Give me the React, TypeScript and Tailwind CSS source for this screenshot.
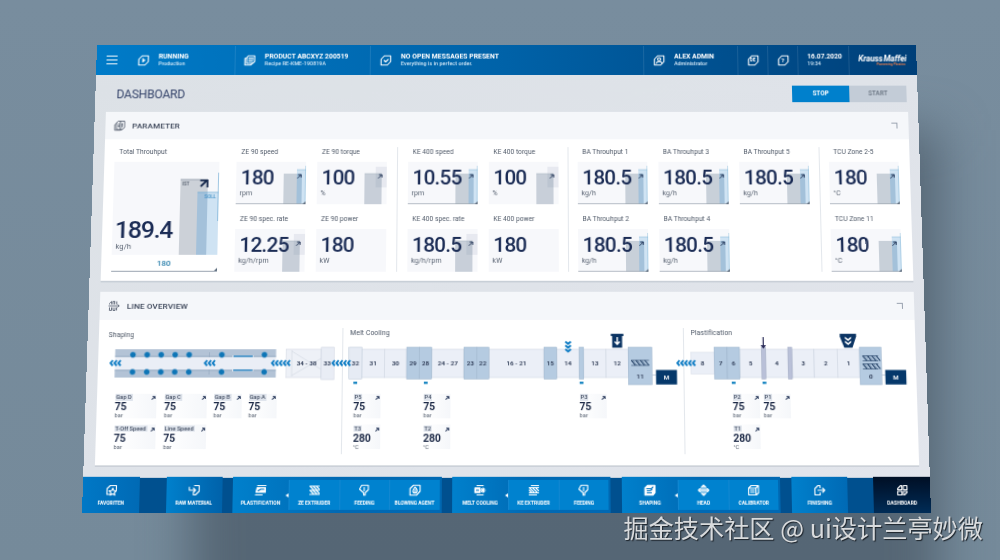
import type { ReactNode } from 'react';

type CardVariant = 'target' | 'plain' | 'none';

interface Metric {
  label: string;
  value: string;
  unit: string;
  variant: CardVariant;
}

interface Reading {
  label: string;
  value: string;
  unit: string;
}

interface ReadingColumn {
  className: string;
  items: Reading[];
}

interface Segment {
  x: number;
  w: number;
  label?: string;
  kind: 'light' | 'blue' | 'tall' | 'lilac' | 'small';
}

const metricGroups: { className: string; items: Metric[] }[] = [
  {
    className: 'w-[149px] ml-[17px]',
    items: [
      { label: 'ZE 90 speed', value: '180', unit: 'rpm', variant: 'target' },
      { label: 'ZE 90 torque', value: '100', unit: '%', variant: 'plain' },
      { label: 'ZE 90 spec. rate', value: '12.25', unit: 'kg/h/rpm', variant: 'plain' },
      { label: 'ZE 90 power', value: '180', unit: 'kW', variant: 'none' },
    ],
  },
  {
    className: 'w-[169px] ml-[10px] pl-[10px] pr-[9px] border-l border-[#e3e7ec]',
    items: [
      { label: 'KE 400 speed', value: '10.55', unit: 'rpm', variant: 'target' },
      { label: 'KE 400 torque', value: '100', unit: '%', variant: 'plain' },
      { label: 'KE 400 spec. rate', value: '180.5', unit: 'kg/h/rpm', variant: 'plain' },
      { label: 'KE 400 power', value: '180', unit: 'kW', variant: 'none' },
    ],
  },
  {
    className: 'w-[249px] pl-[9px] pr-[10px] border-l border-[#e3e7ec]',
    items: [
      { label: 'BA Throuhput 1', value: '180.5', unit: 'kg/h', variant: 'target' },
      { label: 'BA Throuhput 3', value: '180.5', unit: 'kg/h', variant: 'target' },
      { label: 'BA Throuhput 5', value: '180.5', unit: 'kg/h', variant: 'target' },
      { label: 'BA Throuhput 2', value: '180.5', unit: 'kg/h', variant: 'target' },
      { label: 'BA Throuhput 4', value: '180.5', unit: 'kg/h', variant: 'target' },
    ],
  },
  {
    className: 'w-[79px] pl-[9px] border-l border-[#e3e7ec]',
    items: [
      { label: 'TCU Zone 2-5', value: '180', unit: '°C', variant: 'target' },
      { label: 'TCU Zone 11', value: '180', unit: '°C', variant: 'target' },
    ],
  },
];

const bar = (label: string): Reading => ({ label, value: '75', unit: 'bar' });
const temp = (label: string): Reading => ({ label, value: '280', unit: '°C' });

const shapingReadings: ReadingColumn[] = [
  { className: 'ml-[18px] w-[40px]', items: [bar('Gap D'), bar('T-Off Speed')] },
  { className: 'ml-[8px] w-[41px]', items: [bar('Gap C'), bar('Line Speed')] },
  { className: 'ml-[7px] w-[27px]', items: [bar('Gap B')] },
  { className: 'ml-[7px] w-[27px]', items: [bar('Gap A')] },
];

const coolingReadings: ReadingColumn[] = [
  { className: 'ml-[11px] w-[26px]', items: [bar('P5'), temp('T3')] },
  { className: 'ml-[42px] w-[26px]', items: [bar('P4'), temp('T2')] },
  { className: 'ml-[126px] w-[26px]', items: [bar('P3')] },
];

const plastReadings: ReadingColumn[] = [
  { className: 'ml-[47px] w-[26px]', items: [bar('P2'), temp('T1')] },
  { className: 'ml-[4px] w-[26px]', items: [bar('P1')] },
];

const coolingSegments: Segment[] = [
  { x: 257.5, w: 21.8, label: '31', kind: 'light' },
  { x: 279.3, w: 21.8, label: '30', kind: 'light' },
  { x: 325.5, w: 31.5, label: '24 - 27', kind: 'light' },
  { x: 381.4, w: 53.7, label: '16 - 21', kind: 'light' },
  { x: 447.5, w: 22, label: '14', kind: 'light' },
  { x: 473.8, w: 21.8, label: '13', kind: 'light' },
  { x: 495.6, w: 21.7, label: '12', kind: 'light' },
  { x: 244.8, w: 12.7, label: '32', kind: 'tall' },
  { x: 301.1, w: 12.3, label: '29', kind: 'blue' },
  { x: 313.4, w: 12.1, label: '28', kind: 'blue' },
  { x: 357, w: 12.4, label: '23', kind: 'blue' },
  { x: 369.4, w: 12, label: '22', kind: 'blue' },
  { x: 435.1, w: 12.4, label: '15', kind: 'blue' },
  { x: 469.5, w: 4.3, kind: 'blue' },
];

const plastSegments: Segment[] = [
  { x: 578.5, w: 22.7, label: '8', kind: 'small' },
  { x: 626, w: 21.5, label: '5', kind: 'light' },
  { x: 651.4, w: 21.8, label: '4', kind: 'light' },
  { x: 677.1, w: 21.7, label: '3', kind: 'light' },
  { x: 698.8, w: 22.5, label: '2', kind: 'light' },
  { x: 721.3, w: 21.8, label: '1', kind: 'light' },
  { x: 601.2, w: 12.7, label: '7', kind: 'blue' },
  { x: 613.9, w: 12.1, label: '6', kind: 'blue' },
  { x: 647.5, w: 3.9, kind: 'lilac' },
  { x: 673.2, w: 3.9, kind: 'lilac' },
];

const segmentStyle = {
  light: { y: 8, h: 28, fill: '#ebeff7', stroke: '#c9d1dd' },
  small: { y: 11, h: 21.5, fill: '#ebeff7', stroke: '#d3dae5' },
  tall: { y: 6, h: 31.5, fill: '#e6ebf4', stroke: '#bcc8d8' },
  blue: { y: 6, h: 31.5, fill: '#b5cbe1', stroke: '#9ab2ca' },
  lilac: { y: 6, h: 31.5, fill: '#b9c0d8', stroke: '#9fa9c2' },
};

/* ---------- icons ---------- */

const LEAF = 'M9 2.5H21.5V14.5L15 21.5H2.5V9.5Z';

function Icon({ children, className = 'size-[12px]' }: { children: ReactNode; className?: string }) {
  return (
    <svg
      viewBox="0 0 24 24"
      className={`shrink-0 ${className}`}
      fill="none"
      stroke="currentColor"
      strokeWidth="2.200"
      strokeLinejoin="round"
      strokeLinecap="round"
    >
      {children}
    </svg>
  );
}

const icons: Record<string, ReactNode> = {
  running: <><path d={LEAF} /><path d="M10 8v8l5-4z" fill="currentColor" strokeWidth="1" /></>,
  product: <><path d="M9 2.500H22V14l-4 4H6V6z" /><path d="M6 7.500H2.500V21.500H14l3-3M10 7h9M10 10.500h9M10 14h7" /></>,
  check: <><path d={LEAF} /><path d="M8.500 12l3 3 5-5" /></>,
  user: <><path d={LEAF} /><circle cx="12" cy="9.500" r="3" /><path d="M6.500 18c1-5 10-5 11 0" /></>,
  leaf: <path d={LEAF} />,
  favorite: <><path d="M10 20H3V9l6-6h12v8" /><path d="M14 8l2 4.500 5 .500-3.700 3.500 1 5-4.300-2.500-4.500 2.500 1-5L7 13l5-.500z" /></>,
  raw: <><path d="M12 3h9v11l-7 7H10v-4" /><path d="M2 6v6h12M10 8l4 4-4 4" /></>,
  plast: <><path d="M6 3h16M2 21h13" /><path d="M5 7h16v9H3z" fill="currentColor" /><path d="M7 13l5-3h6" stroke="#0073c0" /></>,
  extruder: <path d="M3 4h18M3 20h18M3 12h18M4 5l6 6M10 5l6 6M16 5l5 5M4 13l6 6M10 13l6 6M16 13l5 5" />,
  keExtruder: <path d="M7 3h14M3 21h14M3 7h18M3 17h18M4 8l8 8M10 8l8 8M16 8l5 5M3 12l4 4" />,
  feeding: <><path d="M7 2.500h13V11l-6 6v4.500h-3V17l-8-7z" /><path d="M12 7v6" /></>,
  blowing: <><path d="M9 2.500H22V14l-7 7.500H2.500V9z" /><path d="M12 6c5 4 5 6 4 9s-7 3-8 0 1-4 4-9z" /><path d="M12 11v5" /></>,
  cooling: <><path d="M6 3h12M6 21h12" /><path d="M2 7.500h10v9H2z" fill="currentColor" /><path d="M5 12h4" stroke="#0073c0" /><path d="M13 12h9M18 7.500v9M15 9l5 6M20 9l-5 6" /></>,
  shaping: <><path d="M8 2.500H22V17l-4 4.500H2.500V8z" fill="currentColor" /><path d="M6 9h9l3-3M7 13h5l4-2M7 17h8" stroke="#0073c0" /></>,
  head: <path d="M12 2v20M2 12h20M8 6l4-4 4 4v12l-4 4-4-4zM5 9l-3 3 3 3M19 9l3 3-3 3" />,
  calibrator: <path d="M8 3H22V17l-4 4H3V8zM3 8h14v13M7 12h7M7 16h7M17 8l4-4" />,
  finishing: <><path d="M13 7V3H9L3 9v12h10v-4" /><path d="M9 12h13M18 8l4 4-4 4" /></>,
  dashboard: <path d="M9 3h2v8H3V9zM14 3h7v8h-7zM3 14h8v7H3zM14 14h7v2l-5 5h-2z" />,
};

function TrendArrow({ className = 'size-[5px]' }: { className?: string }) {
  return (
    <svg viewBox="0 0 10 10" className={className} fill="none" stroke="#17294d" strokeWidth="2.200">
      <path d="M1 9L8.500 1.500M2.500 1.500h6V7.500" />
    </svg>
  );
}

/* ---------- header ---------- */

function StatusItem({ icon, title, sub, className }: { icon: string; title: string; sub: string; className: string }) {
  return (
    <div className={`flex items-center gap-[9px] ${className}`}>
      <Icon>{icons[icon]}</Icon>
      <div className="flex flex-col whitespace-nowrap">
        <span className="text-[6.8px] leading-[8px] font-bold">{title}</span>
        <span className="text-[5.4px] leading-[7px] font-medium text-[#d3e8f7]">{sub}</span>
      </div>
    </div>
  );
}

function TopBar() {
  return (
    <header className="flex h-[31px] shrink-0 items-stretch bg-linear-to-r from-[#007bc8] via-[#0062a8] to-[#003f78] pt-[0.5px] text-white">
      <div className="flex w-[41px] flex-col justify-center gap-[3px] pl-[10px]">
        <span className="h-px w-[11px] bg-white" />
        <span className="h-px w-[11px] bg-white" />
        <span className="h-px w-[11px] bg-white" />
      </div>
      <StatusItem icon="running" title="RUNNING" sub="Production" className="w-[97px]" />
      <StatusItem icon="product" title="PRODUCT ABCXYZ 200519" sub="Recipe RE-KME-190819A" className="w-[135px] border-l border-white/10 pl-[8px]" />
      <StatusItem icon="check" title="NO OPEN MESSAGES PRESENT" sub="Everything is in perfect order." className="w-[273px] border-l border-white/10 pl-[9px] tracking-[0.04px]" />
      <StatusItem icon="user" title="ALEX ADMIN" sub="Administrator" className="w-[94px] border-l border-white/10 pl-[9px]" />
      <div className="grid w-[30px] place-items-center border-l border-white/10">
        <Icon className="col-start-1 row-start-1 size-[12px]">{icons.leaf}</Icon>
        <span className="col-start-1 row-start-1 text-[4.500px] leading-none font-bold">DE</span>
      </div>
      <div className="grid w-[30px] place-items-center border-l border-white/10">
        <Icon className="col-start-1 row-start-1 size-[12px]">{icons.leaf}</Icon>
        <span className="col-start-1 row-start-1 text-[6px] leading-none font-bold">?</span>
      </div>
      <div className="flex w-[51px] flex-col justify-center border-l border-white/10 pl-[9px]">
        <span className="text-[6.700px] leading-[8px] font-bold">16.07.2020</span>
        <span className="text-[5.300px] leading-[7px] font-medium text-[#d3e8f7]">19:34</span>
      </div>
      <div className="flex flex-1 flex-col justify-center border-l border-white/10 pl-[9px] pt-[1px] whitespace-nowrap">
        <span className="text-[8.200px] leading-[8px] font-bold tracking-[-0.05px] italic [word-spacing:-1.2px]">Krauss Maffei</span>
        <span className="pl-[18px] text-[3.400px] leading-[4px] font-bold text-[#e07a4c] italic">Pioneering Plastics</span>
      </div>
    </header>
  );
}

/* ---------- parameter panel ---------- */

function PanelHeader({ title, children }: { title: string; children: ReactNode }) {
  return (
    <div className="flex h-[28px] items-center bg-[#f5f7fa] pr-[11px] pl-[8px] text-[#3b4558]">
      {children}
      <h2 className="ml-[7px] flex-1 pt-[1.500px] text-[8px] leading-none font-medium tracking-[0.15px]">{title}</h2>
      <span className="size-[6px] border-t border-r border-[#9aa3b0]" />
    </div>
  );
}

function MiniBars({ variant }: { variant: CardVariant }) {
  if (variant === 'none') return null;
  return (
    <svg viewBox="0 0 69 43" className="absolute inset-0 size-full">
      {variant === 'target' ? (
        <>
          <rect x="47" y="12" width="18" height="31" fill="#c8d0d9" />
          <rect x="60" y="8" width="9" height="35" fill="#cfe3f3" />
          <rect x="60" y="12" width="5" height="31" fill="#a3c1da" />
          <path d="M60 8H69M68.700 4V43" stroke="#7fb4d6" strokeWidth="0.500" />
          <path d="M0 42.600H69" stroke="#9aa4b0" strokeWidth="0.800" />
          <path d="M69 40V43H66z" fill="#5b6a7c" />
        </>
      ) : (
        <>
          <rect x="58" y="5" width="11" height="21" fill="#e7e9f0" />
          <rect x="47" y="12" width="17" height="31" fill="#c8cfd9" />
          <rect x="58" y="12" width="6" height="14" fill="#bcc5d1" />
          <path d="M47 12H64" stroke="#a7b0bd" strokeWidth="0.500" />
        </>
      )}
      <path d="M60.500 16.800L64 13.300M61.300 13.100H64.200V16" fill="none" stroke="#17294d" strokeWidth="0.900" />
    </svg>
  );
}

function MetricCard({ metric }: { metric: Metric }) {
  return (
    <div>
      <p className="h-[10px] pl-[5px] text-[6.600px] leading-[11px] tracking-[0.03px] whitespace-nowrap text-[#4f5968]">{metric.label}</p>
      <div className="relative mt-[5px] h-[43px] bg-[#f7f8fb] pt-[6px]">
        <MiniBars variant={metric.variant} />
        <p className="relative pl-[5px] text-[20.500px] leading-[20px] font-medium tracking-[-0.75px] text-[#1b2c55]">{metric.value}</p>
        <p className="relative pl-[4px] text-[7px] leading-[12px] tracking-[0.1px] text-[#5a6473]">{metric.unit}</p>
      </div>
    </div>
  );
}

function TotalThroughput() {
  return (
    <div className="ml-[10px] w-[104px]">
      <p className="h-[10px] pl-[5px] text-[6.600px] leading-[11px] tracking-[0.06px] text-[#4f5968]">Total Throuhput</p>
      <div className="relative mt-[5px] flex h-[94px] flex-col justify-end bg-[#f7f8fb] pb-[3px]">
        <svg viewBox="0 0 104 94" className="absolute inset-0 size-full">
          <rect x="66" y="18" width="27" height="76" fill="#ccd1d8" />
          <path d="M66 18H93" stroke="#8b95a3" strokeWidth="0.800" />
          <rect x="83" y="31" width="21" height="63" fill="#cfe3f3" />
          <rect x="83" y="31" width="10" height="63" fill="#a4c1da" />
          <path d="M83 31H104M103.600 11V60" stroke="#6fabd2" strokeWidth="0.700" />
          <path d="M86 25L92 19M85.500 18.900H92.700V26" fill="none" stroke="#17294d" strokeWidth="1.800" />
          <text x="68" y="24.500" fontSize="4.500" fontWeight="500" fill="#4c5666">IST</text>
          <text x="90" y="37" fontSize="4.800" fontWeight="500" fill="#3d8fc6">SOLL</text>
        </svg>
        <p className="relative pl-[3px] text-[24.500px] leading-[23px] font-medium tracking-[-1.200px] text-[#1b2c55]">189.4</p>
        <p className="relative pl-[4px] text-[7.500px] leading-[11px] tracking-[0.1px] text-[#5a6473]">kg/h</p>
      </div>
      <div className="relative h-[17px] border-b border-[#9aa4b0] text-center text-[8px] leading-[17px] font-medium text-[#2b80ac]">
        180
        <svg viewBox="0 0 4 4" className="absolute right-0 bottom-0 size-[3px]">
          <path d="M4 0V4H0z" fill="#5b6a7c" />
        </svg>
      </div>
    </div>
  );
}

function ParameterPanel() {
  return (
    <section className="h-[171px] shrink-0 bg-white shadow-[0_1.500px_0_#c6cdd5]">
      <PanelHeader title="PARAMETER">
        <svg viewBox="0 0 24 24" className="size-[12px]" fill="none" stroke="currentColor" strokeWidth="1.500">
          <path d="M9 3H22V16l-4 4H6V6zM6 7L2.500 10v11.500H14l3-1.500M10.500 7v9M17 7v9M13.700 3v17M9 13h3M15.500 10h3" />
        </svg>
      </PanelHeader>
      <div className="flex pt-[8px]">
        <TotalThroughput />
        {metricGroups.map((group) => (
          <div key={group.items[0].label} className={`flex shrink-0 flex-wrap content-start gap-x-[11px] gap-y-[10px] ${group.className}`}>
            {group.items.map((metric) => (
              <div key={metric.label} className="w-[69px]">
                <MetricCard metric={metric} />
              </div>
            ))}
          </div>
        ))}
      </div>
    </section>
  );
}

/* ---------- line overview ---------- */

function Chevrons({ x, y, count, vertical = false }: { x: number; y: number; count: number; vertical?: boolean }) {
  const items = Array.from({ length: count }, (_, i) => i);
  return (
    <g fill="none" stroke="#0e7cc4" strokeWidth="1.900" transform={`translate(${x} ${y})${vertical ? ' rotate(-90)' : ''}`}>
      {items.map((i) => (
        <path key={i} d={`M${i * 3.8 + 3.4} -2.700L${i * 3.8 + 1.2} 0L${i * 3.8 + 3.4} 2.700`} />
      ))}
    </g>
  );
}

function Segments({ items }: { items: Segment[] }) {
  return (
    <>
      {items.map((s) => {
        const st = segmentStyle[s.kind];
        return (
          <g key={s.x}>
            <rect x={s.x} y={st.y} width={s.w} height={st.h} fill={st.fill} stroke={st.stroke} strokeWidth="0.500" />
            {s.label && <PartLabel x={s.x + s.w / 2} y={24} text={s.label} />}
          </g>
        );
      })}
    </>
  );
}

function PartLabel({ x, y, text, fill = '#2a3752' }: { x: number; y: number; text: string; fill?: string }) {
  return (
    <text x={x} y={y} fontSize="6.200" fontWeight="600" textAnchor="middle" fill={fill}>
      {text}
    </text>
  );
}

// Block with the screw flights plus the motor that drives it
function ScrewDrive({ x, w, motorX, label, rows }: { x: number; w: number; motorX: number; label: string; rows: number[] }) {
  return (
    <g>
      <path d={`M${x + w} 33.500H${motorX}`} stroke="#b5c3d4" strokeWidth="0.800" />
      <rect x={x} y="6" width={w} height="37" fill="#b5cbe1" stroke="#9ab2ca" strokeWidth="0.500" />
      {rows.map((y) => (
        <g key={y} stroke="#1f3d63" fill="none">
          <path d={`M${x + 3} ${y}h${w - 6}M${x + 3} ${y + 5}h${w - 6}`} strokeWidth="0.600" />
          <path
            d={[0, 4.4, 8.8, 13.2].map((d) => `M${x + 3 + d} ${y}l4 5`).join('')}
            strokeWidth="1.100"
          />
          <path
            d={[1.5, 5.9, 10.3].map((d) => `M${x + 3 + d} ${y}l4 5`).join('')}
            strokeWidth="0.400"
          />
        </g>
      ))}
      <PartLabel x={x + w / 2} y={37.500} text={label} />
      <rect x={motorX} y="28.500" width="20.400" height="14.300" fill="#05386a" />
      <PartLabel x={motorX + 10.200} y={38} text="M" fill="#fff" />
    </g>
  );
}

function Marker({ x }: { x: number }) {
  return <rect x={x} y="40" width="3.700" height="2.300" fill="#1b87c2" />;
}

function ShapingDiagram() {
  return (
    <>
      <rect x="16.500" y="8" width="157" height="28" fill="#eaeef6" />
      <rect x="16.500" y="8" width="157" height="8" fill="#b3c3d6" />
      <rect x="16.500" y="28" width="157" height="8" fill="#b3c3d6" />
      <path d="M16.500 15H173.500M16.500 29H173.500M108.500 11v5M108.500 28v5" stroke="#93a8c0" strokeWidth="0.600" />
      {[33.8, 47.7, 61.4, 75, 88.7, 120.6, 162.2].map((x) => (
        <g key={x} fill="#0e75b6" stroke="#bccddf" strokeWidth="0.500">
          <circle cx={x} cy="13.500" r="3" />
          <circle cx={x} cy="30.500" r="3" />
        </g>
      ))}
      <path d="M131 15H151.500M131 28.800H151.500" stroke="#e3ebf4" strokeWidth="2.200" />
      <path d="M132 15H150.800M132 28.800H150.800" stroke="#2b83bf" strokeWidth="1.500" />
      <rect x="183.500" y="8" width="34.300" height="28" fill="#eef1f7" stroke="#cdd3df" strokeWidth="0.500" />
      <path d="M189 9v26M189 10L217.800 28M189 34L217.800 17" fill="none" stroke="#d0d6e1" strokeWidth="0.600" />
      <rect x="217.800" y="6" width="12.400" height="32" fill="#e9edf5" stroke="#c9d0dd" strokeWidth="0.500" />
      <PartLabel x={203.500} y={24} text="34 - 38" />
      <PartLabel x={223.500} y={24} text="33" />
      <Chevrons x={11} y={21.700} count={3} />
      <Chevrons x={103} y={21.700} count={3} />
      <Chevrons x={168.500} y={21.700} count={5} />
    </>
  );
}

function CoolingDiagram() {
  return (
    <>
      <Segments items={coolingSegments} />
      <Chevrons x={227.500} y={21.700} count={5} />
      <Chevrons x={458.700} y={11.500} count={3} vertical />
      <path d="M500.500 -7.300H512.800V-5H511.500V6.400H501.800V-5H500.500z" fill="#0b3463" />
      <path d="M506.700 -4V2.500M504.300 0.500L506.700 3.200L509.100 0.500" fill="none" stroke="#fff" strokeWidth="1.400" />
      <Marker x={249.300} />
      <Marker x={318} />
      <Marker x={469.800} />
      <ScrewDrive x={517.300} w={23.200} motorX={544.300} label="11" rows={[19]} />
    </>
  );
}

function PlastDiagram() {
  return (
    <>
      <Segments items={plastSegments} />
      <Chevrons x={564} y={21.700} count={5} />
      <path d="M649.400 -4V4" stroke="#2b2c58" strokeWidth="1.200" />
      <path d="M646.700 4H652.200L649.400 7.500z" fill="#2b2c58" />
      <path d="M724.300 -7.300H740.300V-4.500L736.500 6.400H728.500L724.300 -4.500z" fill="#0b3463" />
      <path d="M729.300 -4.500L732.300 -2L735.300 -4.500V-2.500L732.300 0L729.300 -2.500zM729.300 -0.500L732.300 2L735.300 -0.500V1.500L732.300 4L729.300 1.500z" fill="#fff" />
      <Marker x={618} />
      <Marker x={648} />
      <ScrewDrive x={743.100} w={21.200} motorX={767.800} label="0" rows={[14.500, 22.500]} />
    </>
  );
}

function ReadingCard({ reading }: { reading: Reading }) {
  return (
    <div className="h-[24px] bg-linear-to-r from-white to-[#f5f7fa] pt-[0.500px]">
      <p className="flex h-[7px] items-start justify-between pr-[1px]">
        <span className="bg-[#dfe4ec] px-[1px] text-[5.700px] leading-[6.500px] font-medium whitespace-nowrap text-[#475266]">{reading.label}</span>
        <TrendArrow className="mt-[2px] size-[4px] shrink-0" />
      </p>
      <p className="text-[10.200px] leading-[11px] font-bold tracking-[-0.1px] text-[#1e2b48]">{reading.value}</p>
      <p className="text-[5.600px] leading-[6px] text-[#5a6473]">{reading.unit}</p>
    </div>
  );
}

interface LineSectionProps {
  title: string;
  className: string;
  titleClass: string;
  viewBox: string;
  columns: ReadingColumn[];
  children: ReactNode;
}

function LineSection({ title, className, titleClass, viewBox, columns, children }: LineSectionProps) {
  return (
    <div className={`h-[124px] ${className}`}>
      <h3 className={`h-[13px] text-[6.800px] leading-[10px] tracking-[0.06px] text-[#4f5968] ${titleClass}`}>{title}</h3>
      <svg viewBox={viewBox} preserveAspectRatio="xMinYMin" className="block h-[44px] w-full overflow-visible">
        {children}
      </svg>
      <div className="mt-[7.500px] flex">
        {columns.map((col) => (
          <div key={col.items[0].label} className={`flex shrink-0 flex-col gap-[6.500px] ${col.className}`}>
            {col.items.map((reading) => (
              <ReadingCard key={reading.label} reading={reading} />
            ))}
          </div>
        ))}
      </div>
    </div>
  );
}

function LineOverviewPanel() {
  return (
    <section className="mt-[11px] h-[170.500px] shrink-0 bg-white shadow-[0_1px_0_#b9c0c9]">
      <PanelHeader title="LINE OVERVIEW">
        <svg viewBox="0 0 24 24" className="size-[12px]" fill="none" stroke="currentColor" strokeWidth="1.500">
          <path d="M1 12h21M19 9l3 3-3 3M3 9V7l4-4v6M10 9V3h3v6M17 9V3M3 15v6h4v-6M10 15v6h4v-6M17 15v6" />
        </svg>
      </PanelHeader>
      <div className="flex pt-[8px]">
        <LineSection title="Shaping" className="w-[238px]" titleClass="pl-[10px] pt-[1.500px]" viewBox="0 0 238 44" columns={shapingReadings}>
          <ShapingDiagram />
        </LineSection>
        <LineSection title="Melt Cooling" className="w-[333px] border-l border-[#e3e7ec]" titleClass="pl-[7px]" viewBox="239 0 332 44" columns={coolingReadings}>
          <CoolingDiagram />
        </LineSection>
        <LineSection title="Plastification" className="w-[227px] border-l border-[#e3e7ec]" titleClass="pl-[7px]" viewBox="572 0 226 44" columns={plastReadings}>
          <PlastDiagram />
        </LineSection>
      </div>
    </section>
  );
}

/* ---------- bottom navigation ---------- */

function NavItem({ icon, label, className }: { icon: string; label: string; className: string }) {
  return (
    <button className={`flex shrink-0 flex-col items-center justify-center gap-[3px] text-white ${className}`}>
      <Icon>{icons[icon]}</Icon>
      <span className="text-[4.900px] leading-[6px] font-bold whitespace-nowrap">{label}</span>
    </button>
  );
}

interface NavGroupProps {
  icon: string;
  label: string;
  items: { icon: string; label: string }[];
  className: string;
}

function NavGroup({ icon, label, items, className }: NavGroupProps) {
  return (
    <div className={`flex shrink-0 items-center bg-linear-to-r from-[#0080cc] via-[#0069b3] to-[#0068b2] ${className}`}>
      <NavItem icon={icon} label={label} className="w-[54px]" />
      <div className="relative flex h-[29px] bg-[#0082cf]">
        <svg viewBox="0 0 3 4" className="absolute top-[13px] left-[-3px] h-[4px] w-[3px]">
          <path d="M3 0V4L0 2z" fill="#fff" />
        </svg>
        {items.map((item) => (
          <NavItem key={item.label} icon={item.icon} label={item.label} className="w-[48.500px] border-l border-[#1287d1] first:border-l-0" />
        ))}
      </div>
    </div>
  );
}

function BottomNav() {
  return (
    <nav className="mt-auto flex h-[35px] shrink-0 bg-linear-to-b from-[#e0e4e9] from-4% to-[#00508f] to-4%">
      <NavItem icon="favorite" label="FAVORITEN" className="w-[55px] bg-linear-to-r from-[#0078c6] to-[#006ab5]" />
      <NavItem icon="raw" label="RAW MATERIAL" className="ml-[25.500px] w-[54px] bg-linear-to-r from-[#0080cc] to-[#0062aa]" />
      <NavGroup
        icon="plast"
        label="PLASTIFICATION"
        className="ml-[10.500px] w-[202px]"
        items={[
          { icon: 'extruder', label: 'ZE EXTRUDER' },
          { icon: 'feeding', label: 'FEEDING' },
          { icon: 'blowing', label: 'BLOWING AGENT' },
        ]}
      />
      <NavGroup
        icon="cooling"
        label="MELT COOLING"
        className="ml-[10px] w-[153px]"
        items={[
          { icon: 'keExtruder', label: 'KE EXTRUDER' },
          { icon: 'feeding', label: 'FEEDING' },
        ]}
      />
      <NavGroup
        icon="shaping"
        label="SHAPING"
        className="ml-[11px] w-[153px]"
        items={[
          { icon: 'head', label: 'HEAD' },
          { icon: 'calibrator', label: 'CALIBRATOR' },
        ]}
      />
      <NavItem icon="finishing" label="FINISHING" className="ml-[11px] w-[54px] bg-linear-to-r from-[#0080cc] to-[#006ab5]" />
      <NavItem icon="dashboard" label="DASHBOARD" className="ml-auto w-[55px] bg-linear-to-b from-[#000f25] to-[#002c57]" />
    </nav>
  );
}

export default function App() {
  return (
    <div className="relative h-[560px] w-[1000px] overflow-hidden bg-linear-to-b from-[#788d9e] to-[#758a9a] pt-[45px] pl-[97px] font-['Roboto','Liberation_Sans',sans-serif]">
      {/* soft shadow thrown to the lower right by the tilted screen */}
      <div className="absolute top-[130px] left-[190px] h-[500px] w-[750px] bg-[#4a5967]/72 blur-[24px]" />

      {/* terminal screen, leaning back slightly */}
      <main className="relative flex h-[468px] w-[819px] origin-top-left flex-col bg-linear-to-br from-[#dce1e6] to-[#e2e5ec] [transform:matrix3d(1,0,0,0,-0.03092,0.9647,0,-0.0000755,0,0,1,0,0,0,0,1)]">
        <TopBar />
        <div className="flex h-[38px] shrink-0 items-center pt-[1px] pr-[11px] pl-[21px]">
          <h1 className="flex-1 text-[12px] leading-none tracking-[-0.2px] text-[#34436a]">DASHBOARD</h1>
          <div className="flex h-[16.500px] text-[6.300px] font-bold">
            <button className="w-[57px] bg-[#0080cc] text-white">STOP</button>
            <button className="w-[57px] bg-[#c3ccd7] font-medium text-[#66717f]">START</button>
          </div>
        </div>
        <div className="mx-auto flex w-[798px] flex-col">
          <ParameterPanel />
          <LineOverviewPanel />
        </div>
        <BottomNav />
      </main>

      <p className="absolute top-[510px] right-[17px] font-['Noto_Sans_CJK_SC',sans-serif] text-[25.200px] leading-[34px] whitespace-nowrap text-[#d9dbdd] [text-shadow:1px_1px_1px_#1d242b]">
        掘金技术社区 @ ui设计兰亭妙微
      </p>
    </div>
  );
}
